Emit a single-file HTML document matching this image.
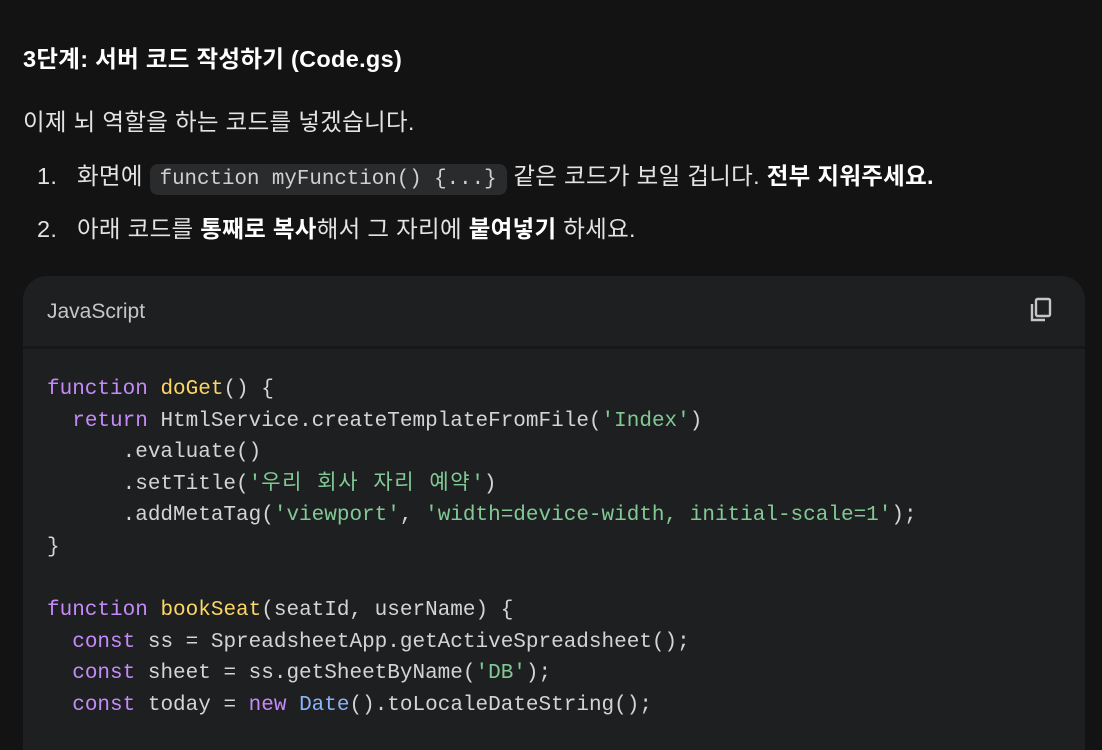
<!DOCTYPE html>
<html><head><meta charset="utf-8"><style>
html,body{margin:0;padding:0;background:#131314;width:1102px;height:750px;overflow:hidden}
body{font-family:"Liberation Sans","Noto Sans CJK KR",sans-serif;color:#e3e3e3;font-size:23.5px;letter-spacing:0.3px;position:relative}
.t{position:absolute;white-space:nowrap;line-height:1}
b{font-weight:700;color:#fff}
.ic{font-family:"Liberation Mono","Noto Sans CJK KR",monospace;font-size:20.8px;letter-spacing:0;background:#2a2b2d;border-radius:8px;padding:4px 10px;color:#d0d0d0}
.card{position:absolute;left:23px;top:276px;width:1062px;height:500px;background:#1e1f20;border-radius:24px;overflow:hidden;letter-spacing:0}
.hdr{height:70px;border-bottom:3px solid #161718}
.lang{position:absolute;left:24px;top:24px;font-size:21px;color:#c4c7c5}
pre{position:absolute;left:24px;top:98px;margin:0;font-family:"Liberation Mono","Noto Sans CJK KR",monospace;font-size:21px;line-height:31.6px;color:#d4d4d4}
.k{color:#c58af9}.f{color:#fdd663}.s{color:#81c995}.c{color:#8ab4f8}
.kr{letter-spacing:1.6px}
</style></head><body>
<div class="t" style="left:23px;top:48px;font-weight:700;color:#fff">3단계: 서버 코드 작성하기 (Code.gs)</div>
<div class="t" style="left:23px;top:111px">이제 뇌 역할을 하는 코드를 넣겠습니다.</div>
<div class="t" style="left:37px;top:165px">1.<span style="position:absolute;left:40px;top:0">화면에 <span class="ic">function myFunction() {...}</span> 같은 코드가 보일 겁니다. <b>전부 지워주세요.</b></span></div>
<div class="t" style="left:37px;top:218px">2.<span style="position:absolute;left:40px;top:0">아래 코드를 <b>통째로 복사</b>해서 그 자리에 <b>붙여넣기</b> 하세요.</span></div>
<div class="card">
<div class="hdr"></div>
<div class="lang">JavaScript</div>
<svg style="position:absolute;left:1006px;top:20px" width="26" height="28" viewBox="0 0 26 28"><rect x="7" y="3" width="14" height="17" rx="1.5" fill="none" stroke="#c4c7c5" stroke-width="2.4"/><path d="M3 8v16h13" fill="none" stroke="#c4c7c5" stroke-width="2.4"/></svg>
<pre><span class="k">function</span> <span class="f">doGet</span>() {
  <span class="k">return</span> HtmlService.createTemplateFromFile(<span class="s">'Index'</span>)
      .evaluate()
      .setTitle(<span class="s">'<span class="kr">우리 회사 자리 예약</span>'</span>)
      .addMetaTag(<span class="s">'viewport'</span>, <span class="s">'width=device-width, initial-scale=1'</span>);
}

<span class="k">function</span> <span class="f">bookSeat</span>(seatId, userName) {
  <span class="k">const</span> ss = SpreadsheetApp.getActiveSpreadsheet();
  <span class="k">const</span> sheet = ss.getSheetByName(<span class="s">'DB'</span>);
  <span class="k">const</span> today = <span class="k">new</span> <span class="c">Date</span>().toLocaleDateString();
</pre>
</div>
</body></html>
